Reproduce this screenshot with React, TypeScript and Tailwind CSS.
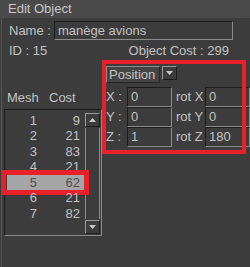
import React from "react";

const meshes = [
  { mesh: 1, cost: 9 },
  { mesh: 2, cost: 21 },
  { mesh: 3, cost: 83 },
  { mesh: 4, cost: 21 },
  { mesh: 5, cost: 62 },
  { mesh: 6, cost: 21 },
  { mesh: 7, cost: 82 },
];

const inset =
  "border border-t-[#1c1c1c] border-l-[#1c1c1c] border-b-[#8c8c8c] border-r-[#8c8c8c]";

function Field({ value, className }: { value: string; className: string }) {
  return (
    <div className={`${inset} h-[20px] pl-[3px] leading-[18px] ${className}`}>
      {value}
    </div>
  );
}

function Arrow({ up }: { up?: boolean }) {
  return (
    <div className="h-[14px] w-[15px] border border-t-[#9a9a9a] border-l-[#9a9a9a] border-b-[#1c1c1c] border-r-[#1c1c1c] bg-[#3c3c3c] flex items-center justify-center">
      <svg width="7" height="4" viewBox="0 0 7 4">
        {up ? (
          <polygon points="0,4 7,4 3.5,0" fill="#c8c8c8" />
        ) : (
          <polygon points="0,0 7,0 3.5,4" fill="#c8c8c8" />
        )}
      </svg>
    </div>
  );
}

export default function App() {
  const coords = [
    { axis: "X", pos: "0", rot: "0" },
    { axis: "Y", pos: "0", rot: "0" },
    { axis: "Z", pos: "1", rot: "180" },
  ];

  return (
    <div className="w-[250px] h-[267px] overflow-hidden bg-[#3c3c3c] text-[#c2c2c2] text-[13px] font-['Liberation_Sans',sans-serif]">
      <div className="h-[18px] bg-[#4a4a4a] pl-[8px] leading-[18px] text-[#c6c6c6]">
        Edit Object
      </div>

      <div className="h-[249px] ml-[1px] border-l border-[#565656]">
        {/* name */}
        <div className="flex items-center pt-[3px] pl-[7px]">
          <span className="w-[45px]">Name :</span>
          <div className={`${inset} w-[179px] h-[19px] pl-[3px] leading-[17px]`}>
            manège avions
          </div>
        </div>

        {/* id + cost */}
        <div className="flex justify-between h-[19px] leading-[19px] pl-[7px] pr-[21px]">
          <span>ID : 15</span>
          <span>Object Cost : 299</span>
        </div>

        <div className="flex">
          {/* mesh list */}
          <div className="w-[101px] pt-[27px] pl-[2px]">
            <div className="flex h-[22px] leading-[22px] pl-[3px]">
              <span className="w-[42px]">Mesh</span>
              <span>Cost</span>
            </div>
            <div className="flex h-[127px] border border-t-[#1c1c1c] border-l-[#1c1c1c] border-b-[#8c8c8c] border-r-[#8c8c8c]">
              <div className="flex-1 pt-[3px] pl-[2px]">
                {meshes.map((m) => (
                  <div
                    key={m.mesh}
                    className={`relative flex h-[15.5px] leading-[15.5px] ${
                      m.mesh === 5 ? "bg-[#a6a6a6] text-[#4e4e4e]" : ""
                    }`}
                  >
                    <span className="w-[30px] text-right">{m.mesh}</span>
                    <span className="w-[43px] text-right">{m.cost}</span>
                    {m.mesh === 5 && (
                      <div className="absolute -left-[6px] -right-[4px] -top-[5px] -bottom-[5px] border-[5px] border-[#e8202a]" />
                    )}
                  </div>
                ))}
              </div>
              <div className="w-[15px] mr-[1px] pt-[3px] pb-[1px] flex flex-col">
                <Arrow up />
                <div className="flex-1 border border-[#8c8c8c] border-t-0 border-b-0 my-[1px]" />
                <Arrow />
              </div>
            </div>
          </div>

          {/* position panel */}
          <div className="relative flex-1 pt-[6px] pl-[4px]">
            <div className="flex items-start">
              <div className="w-[54px] h-[17px] border border-t-[#8c8c8c] border-l-[#8c8c8c] border-b-[#262626] border-r-[#262626] bg-[#444444] pl-[2px] leading-[15px]">
                Position
              </div>
              <div className="ml-[2px]">
                <Arrow />
              </div>
            </div>
            <div className="mt-[4px] flex flex-col">
              {coords.map((c) => (
                <div key={c.axis} className="flex items-center">
                  <span className="w-[21px]">{c.axis} :</span>
                  <Field value={c.pos} className="w-[45px]" />
                  <span className="w-[33px] pl-[4px]">rot {c.axis}</span>
                  <Field value={c.rot} className="w-[45px]" />
                </div>
              ))}
            </div>
            <div className="absolute left-0 top-0 w-[144px] h-[94px] border-[4px] border-[#e8202a]" />
          </div>
        </div>
      </div>
    </div>
  );
}
